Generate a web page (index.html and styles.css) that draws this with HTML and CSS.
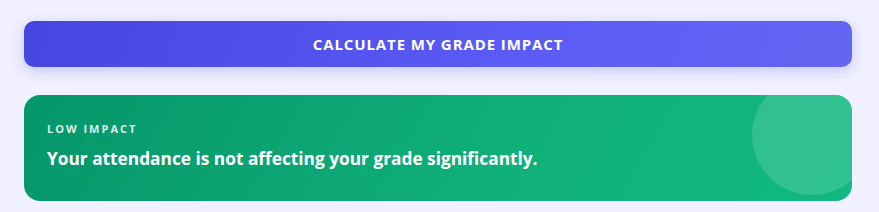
FILE: index.html
```html
<!doctype html>
<html lang="en">
<head>
    <meta charset="UTF-8">
    <title>Grade Impact</title>
    <link rel="stylesheet" href="styles.css">
</head>
<body>
<div class="impact-wrap">
    <button class="calc-btn" type="button">Calculate My Grade Impact</button>

    <div class="impact-card impact-low">
        <div class="impact-label">Low Impact</div>
        <div class="impact-text">Your attendance is not affecting your grade significantly.</div>
    </div>
</div>
</body>
</html>
```

FILE: styles.css
```css
* {
    margin: 0;
    padding: 0;
    box-sizing: border-box;
}
body {
    background: #f0f0fe;
    font-family: "Open Sans", "Noto Sans", sans-serif;
}
.impact-wrap {
    padding: 21px 27px 0 24px;
    display: flex;
    flex-direction: column;
    gap: 28px;
}
.calc-btn {
    height: 46px;
    border: none;
    border-radius: 10px;
    background: linear-gradient(110deg, #4545df 0%, #5a5cf5 60%, #6366f1 100%);
    box-shadow: 0 4px 14px rgba(99, 102, 241, .3);
    color: #fff;
    font-family: inherit;
    font-size: 15px;
    font-weight: 700;
    letter-spacing: .9px;
    text-transform: uppercase;
    cursor: pointer;
}
.impact-card {
    position: relative;
    overflow: hidden;
    height: 106px;
    border-radius: 16px;
    padding: 26px 23px;
    color: #fff;
}
.impact-low {
    background: linear-gradient(120deg, #059669 0%, #10b07a 60%, #10b981 100%);
}
.impact-card::after {
    content: "";
    position: absolute;
    width: 120px;
    height: 120px;
    border-radius: 50%;
    right: -20px;
    top: -20px;
    background: rgba(255, 255, 255, .14);
}
.impact-label {
    font-size: 11px;
    font-weight: 700;
    letter-spacing: 2px;
    text-transform: uppercase;
    opacity: .85;
    margin-bottom: 11px;
}
.impact-text {
    font-size: 17.3px;
    font-weight: 700;
}
```
